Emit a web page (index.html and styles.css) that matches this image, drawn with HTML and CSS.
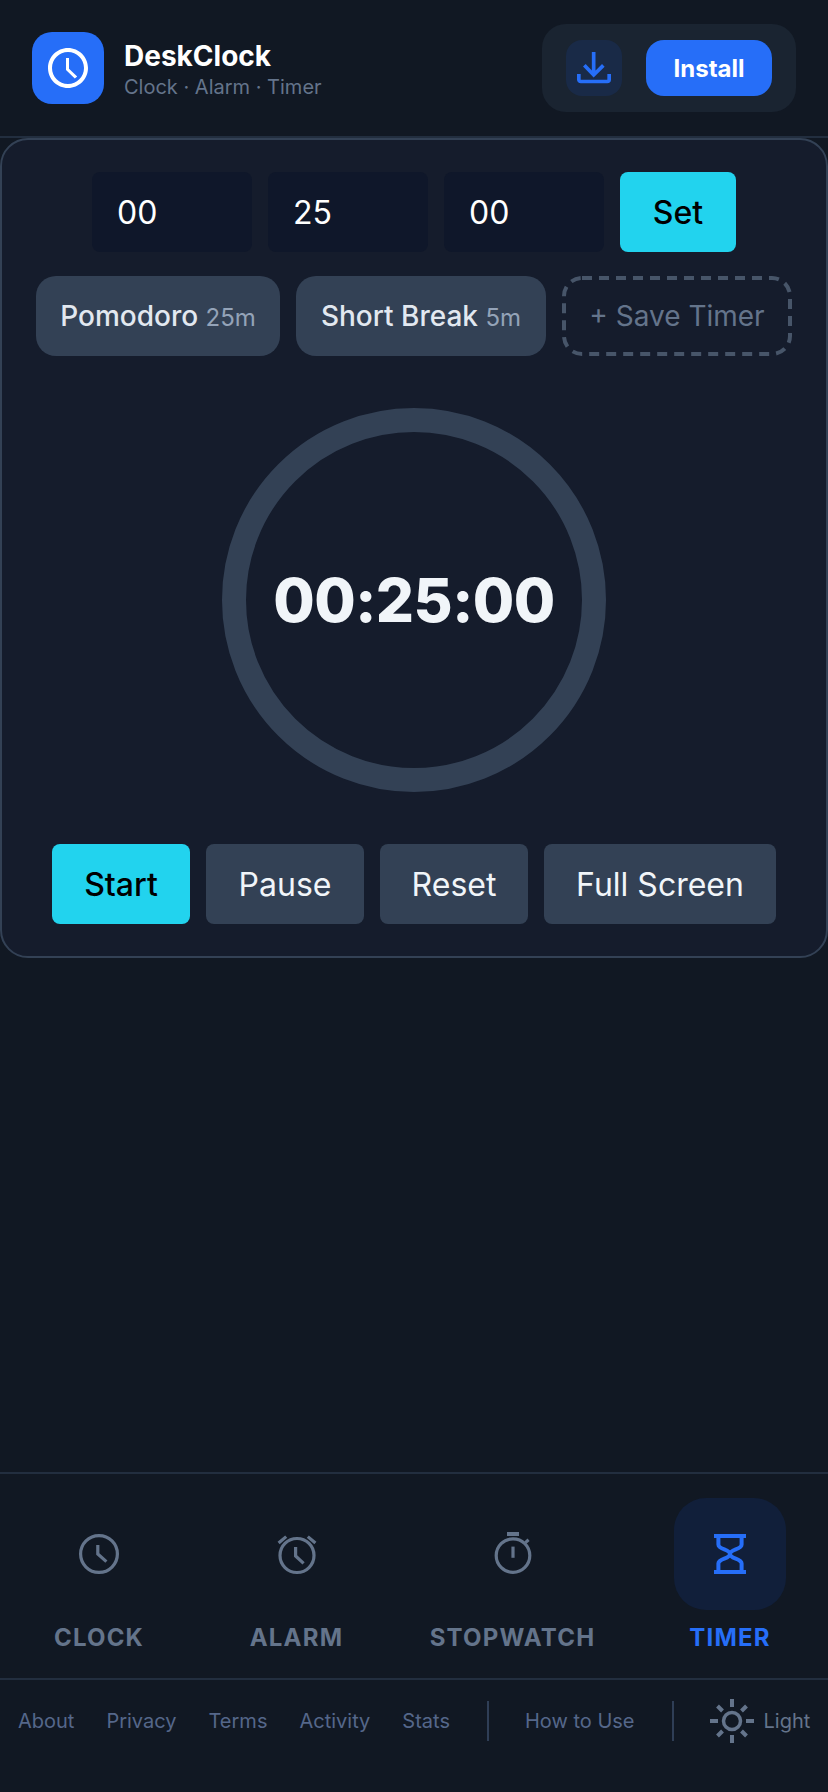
FILE: index.html
```html
<!DOCTYPE html>
<html lang="en">
<head>
<meta charset="utf-8">
<title>DeskClock</title>
<link rel="stylesheet" href="styles.css">
</head>
<body>
<div class="app">
  <header class="header">
    <div class="brand">
      <div class="logo">
        <svg class="logo-icon" viewBox="0 0 24 24" fill="#fff"><path d="M11.990 2C6.470 2 2 6.480 2 12s4.470 10 9.990 10C17.520 22 22 17.520 22 12S17.520 2 11.990 2zM12 20c-4.420 0-8-3.580-8-8s3.580-8 8-8 8 3.580 8 8-3.580 8-8 8zm.5-13H11v6l4.400 4.200 1.200-1-4.100-3.800z"/></svg>
      </div>
      <div class="brand-text">
        <div class="brand-name">DeskClock</div>
        <div class="brand-sub">Clock · Alarm · Timer</div>
      </div>
    </div>
    <div class="install-group">
      <button class="icon-btn">
        <svg viewBox="0 0 24 24" fill="none" stroke="#266ef8" stroke-width="2.200"><path d="M11.800 2.400V16M6.200 10.400l5.600 5.800 5.800-5.800"/><path d="M2.900 15.600v3.300a1.200 1.200 0 0 0 1.200 1.200h15.800a1.200 1.200 0 0 0 1.200-1.200v-3.300"/></svg>
      </button>
      <button class="install-btn">Install</button>
    </div>
  </header>

  <main class="card">
    <div class="inputs">
      <div class="time-input">00</div>
      <div class="time-input">25</div>
      <div class="time-input">00</div>
      <button class="btn btn-accent btn-set">Set</button>
    </div>
    <div class="presets">
      <button class="preset preset-a">Pomodoro <span class="preset-len">25m</span></button>
      <button class="preset preset-b">Short Break <span class="preset-len">5m</span></button>
      <button class="preset-save">
        <svg class="save-outline" viewBox="0 0 230 80" fill="none"><rect x="2" y="2" width="226" height="76" rx="18" stroke="#475569" stroke-width="4" stroke-dasharray="10 7"/></svg>
        + Save Timer
      </button>
    </div>
    <div class="dial-wrap">
      <div class="dial">00:25:00</div>
    </div>
    <div class="controls">
      <button class="btn btn-accent btn-start">Start</button>
      <button class="btn btn-muted btn-pause">Pause</button>
      <button class="btn btn-muted btn-reset">Reset</button>
      <button class="btn btn-muted btn-full">Full Screen</button>
    </div>
  </main>

  <div class="spacer"></div>

  <nav class="tabs">
    <div class="tab tab-clock">
      <div class="tab-icon">
        <svg viewBox="0 0 24 24" fill="none" stroke="currentColor" stroke-width="1.600"><circle cx="12" cy="12" r="9.200"/><path d="M11.400 7.500V12l4.300 3.800"/></svg>
      </div>
      <div class="tab-label">CLOCK</div>
    </div>
    <div class="tab tab-alarm">
      <div class="tab-icon">
        <svg viewBox="0 0 24 24" fill="none" stroke="currentColor" stroke-width="1.600"><circle cx="12" cy="12.750" r="8.500"/><path d="M11.300 8.500V13l4 3.700M2.800 6.500l3.800-3.200M21.200 6.500l-3.800-3.200"/></svg>
      </div>
      <div class="tab-label">ALARM</div>
    </div>
    <div class="tab tab-stop">
      <div class="tab-icon">
        <svg viewBox="0 0 24 24" fill="none" stroke="currentColor" stroke-width="1.600"><circle cx="12" cy="12.800" r="8.400"/><path d="M12 8.300v5.600"/><path d="M9 2h6" stroke-width="2"/><path d="M18.200 6.300l1.600-1.400"/></svg>
      </div>
      <div class="tab-label">STOPWATCH</div>
    </div>
    <div class="tab tab-timer">
      <div class="tab-icon tab-icon-active">
        <svg viewBox="0 0 24 24" fill="none" stroke="currentColor" stroke-width="2"><path d="M4 3h16M4 21h16M6.200 3v4.200c0 2.600 5.800 2.300 5.800 4.800s-5.800 2.200-5.800 4.800V21M17.800 3v4.200c0 2.600-5.800 2.300-5.800 4.800s5.800 2.200 5.800 4.800V21"/></svg>
      </div>
      <div class="tab-label">TIMER</div>
    </div>
  </nav>

  <footer class="footer">
    <a class="foot-link">About</a>
    <a class="foot-link">Privacy</a>
    <a class="foot-link">Terms</a>
    <a class="foot-link">Activity</a>
    <a class="foot-link">Stats</a>
    <span class="foot-div"></span>
    <a class="foot-link">How to Use</a>
    <span class="foot-div"></span>
    <a class="foot-theme">
      <svg viewBox="0 0 44 44" fill="none" stroke="currentColor" stroke-width="4"><circle cx="22" cy="22" r="8.500" stroke-width="3.500"/><path d="M22 0v8M22 36v8M0 22h8M36 22h8M7.500 7l5 5M36.500 7l-5 5M7.500 37l5-5M36.500 37l-5-5"/></svg>
      <span>Light</span>
    </a>
  </footer>
</div>
</body>
</html>
```
FILE: styles.css
```css
* { box-sizing: border-box; }
html, body { margin: 0; padding: 0; }
body {
  width: 828px;
  height: 1792px;
  background: #111823;
  font-family: Inter, "Liberation Sans", sans-serif;
  overflow: hidden;
}
button { font-family: inherit; border: none; padding: 0; margin: 0; }
.app { display: flex; flex-direction: column; height: 1792px; }

.header {
  height: 138px;
  display: flex;
  justify-content: space-between;
  padding: 24px 32px 0;
  border-bottom: 2px solid #222e3f;
}
.brand { display: flex; gap: 20px; padding-top: 8px; height: 80px; }
.logo {
  width: 72px; height: 72px;
  background: #266ef8;
  border-radius: 20px;
  display: flex; align-items: center; justify-content: center;
}
.logo-icon { width: 48px; height: 48px; }
.brand-name { font-size: 28px; font-weight: 700; color: #fff; line-height: 34px; margin-top: 7px; }
.brand-sub { font-size: 20px; color: #64748b; line-height: 26px; margin-top: 1px; }
.install-group {
  width: 254px; height: 88px;
  background: #1a2431;
  border-radius: 24px;
  display: flex; align-items: center; gap: 24px;
  padding: 0 24px;
}
.icon-btn {
  width: 56px; height: 56px;
  background: #192a47;
  border-radius: 16px;
  display: flex; align-items: center; justify-content: center;
}
.icon-btn svg { width: 40px; height: 40px; }
.install-btn {
  width: 126px; height: 56px;
  background: #266ef8;
  color: #fff;
  font-size: 24px; font-weight: 700;
  border-radius: 18px;
}

.card {
  height: 820px;
  background: #151c2c;
  border: 2px solid #334155;
  border-radius: 28px;
  display: flex; flex-direction: column; align-items: center;
  padding-top: 32px;
}
.inputs { display: flex; gap: 16px; }
.time-input {
  width: 160px; height: 80px;
  background: #0f172a;
  border-radius: 8px;
  color: #fff;
  font-size: 32px;
  line-height: 82px;
  padding-left: 25px;
}
.btn {
  height: 80px;
  border-radius: 8px;
  font-size: 32px;
}
.btn-accent { background: #22d3ee; color: #000; }
.btn-muted { background: #334155; color: #f1f5f9; }
.btn-set { width: 116px; font-weight: 500; }
.presets { display: flex; gap: 16px; margin-top: 24px; }
.preset {
  height: 80px;
  background: #334155;
  border-radius: 20px;
  color: #e2e8f0;
  font-size: 28px;
  font-weight: 500;
}
.preset-a { width: 244px; }
.preset-b { width: 250px; }
.preset-len { font-size: 24px; font-weight: 400; color: #94a3b8; }
.preset-save {
  position: relative;
  width: 230px; height: 80px;
  background: transparent;
  color: #64748b;
  font-size: 28px;
}
.save-outline { position: absolute; left: 0; top: 0; width: 230px; height: 80px; }
.dial-wrap { margin-top: 52px; }
.dial {
  width: 384px; height: 384px;
  border-radius: 50%;
  border: 24px solid #334155;
  display: flex; align-items: center; justify-content: center;
  color: #f1f5f9;
  font-size: 60px;
  font-weight: 800;
  letter-spacing: -0.5px;
}
.controls { display: flex; gap: 16px; margin-top: 52px; }
.btn-start { width: 138px; font-weight: 500; }
.btn-pause { width: 158px; }
.btn-reset { width: 148px; }
.btn-full { width: 232px; }

.spacer { flex: 1; }

.tabs {
  height: 208px;
  flex-shrink: 0;
  border-top: 2px solid #222e3f;
  border-bottom: 2px solid #222e3f;
  display: flex;
  padding-top: 24px;
}
.tab { display: flex; flex-direction: column; align-items: center; color: #64748b; }
.tab-clock { width: 198px; }
.tab-alarm { width: 197px; }
.tab-stop { width: 235px; }
.tab-timer { width: 198px; padding-left: 2px; color: #266ef8; }
.tab-icon {
  width: 112px; height: 112px;
  border-radius: 32px;
  display: flex; align-items: center; justify-content: center;
}
.tab-icon svg { width: 48px; height: 48px; }
.tab-icon-active { background: #111f3a; }
.tab-label {
  font-size: 24px;
  font-weight: 700;
  letter-spacing: 1.2px;
  line-height: 30px;
  margin-top: 13px;
}

.footer {
  display: flex; align-items: center;
  flex-shrink: 0;
  height: 112px;
  padding: 0 0 30px 18px;
  font-size: 20px;
}
.foot-link { margin-right: 32px; color: #55678a; white-space: nowrap; }
.foot-div {
  flex-shrink: 0;
  width: 2px; height: 40px;
  background: #2f3e56;
  margin: 0 36px 0 5px;
}
.foot-theme { display: flex; align-items: center; gap: 10px; color: #64748b; }
.foot-theme svg { width: 44px; height: 44px; }
```
